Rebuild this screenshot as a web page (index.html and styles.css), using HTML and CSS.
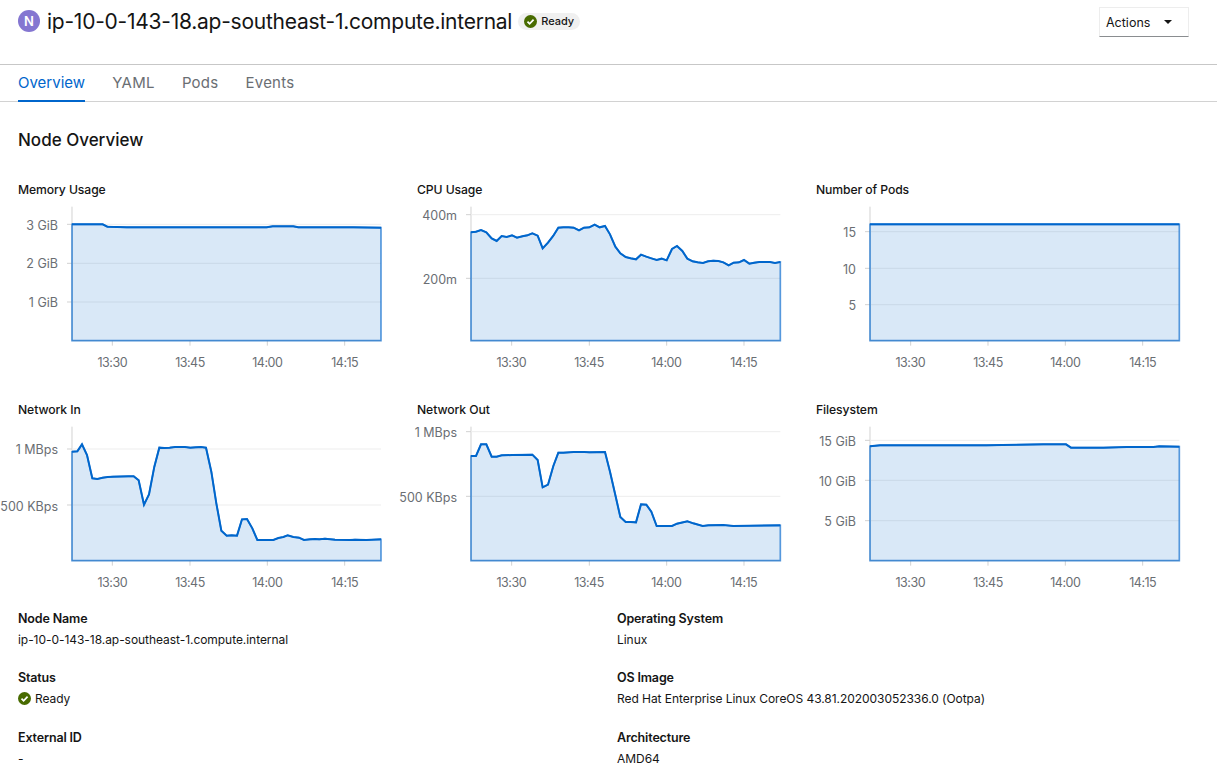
FILE: index.html
```html
<!DOCTYPE html>
<html lang="en">

<head>
    <meta charset="UTF-8">
    <title>Node details</title>
    <link rel="stylesheet" href="styles.css">
</head>

<body>
    <header class="page-head">
        <h1 class="node-title">
            <span class="node-badge">N</span>
            <span class="node-name">ip-10-0-143-18.ap-southeast-1.compute.internal</span>
            <span class="status-pill">
                <svg class="ok-icon" viewBox="0 0 16 16"><circle cx="8" cy="8" r="8" fill="#486b00"/><path d="M4.3 8.2l2.6 2.6 4.9-5" fill="none" stroke="#fff" stroke-width="2.2"/></svg>
                Ready
            </span>
        </h1>
        <button class="actions-btn">Actions <span class="caret"></span></button>
    </header>

    <nav class="tabs">
        <a href="#" class="tab active">Overview</a>
        <a href="#" class="tab">YAML</a>
        <a href="#" class="tab">Pods</a>
        <a href="#" class="tab">Events</a>
    </nav>

    <main class="overview">
        <h2>Node Overview</h2>

        <div class="charts">
            <!-- Memory Usage -->
            <figure class="chart">
                <figcaption>Memory Usage</figcaption>
                <svg viewBox="0 0 381 170">
                    <g transform="translate(-18 -25) scale(.33333)">
                        <path class="axis" d="M216 95V497H1143M337 497v15M570 497v15M802 497v15M1034 497v15M201 148h15M201 265h15M201 381h15"/>
                        <path class="grid" d="M216 148H1143M216 265H1143M216 381H1143"/>
                        <polygon class="area" points="216,497 216,148 308,148 322,155 380,157 800,157 818,154 880,154 895,157 1060,157 1143,158 1143,497"/>
                        <polyline class="line" points="216,148 308,148 322,155 380,157 800,157 818,154 880,154 895,157 1060,157 1143,158"/>
                    </g>
                    <text class="y-label" x="40" y="29">3 GiB</text>
                    <text class="y-label" x="40" y="67">2 GiB</text>
                    <text class="y-label" x="40" y="106">1 GiB</text>
                    <text class="x-label" x="94.3" y="166.5">13:30</text>
                    <text class="x-label" x="172" y="166.5">13:45</text>
                    <text class="x-label" x="249.3" y="166.5">14:00</text>
                    <text class="x-label" x="326.7" y="166.5">14:15</text>
                </svg>
            </figure>

            <!-- CPU Usage -->
            <figure class="chart">
                <figcaption>CPU Usage</figcaption>
                <svg viewBox="0 0 381 170">
                    <g transform="translate(-7 -25) scale(.33333)">
                        <path class="axis" d="M183 95V497H1111M305 497v15M538 497v15M770 497v15M1002 497v15M168 119h15M168 310h15"/>
                        <path class="grid" d="M183 119H1111M183 310H1111"/>
                        <polygon class="area" points="183,497 183,172 198,170 213,165 229,172 245,190 260,198 275,183 290,186 306,181 321,188 337,184 352,181 367,175 383,182 398,220 414,203 430,182 445,158 460,157 476,157 491,158 507,166 522,158 538,157 554,149 569,157 585,153 600,178 616,215 631,235 647,246 662,250 678,253 693,239 709,245 724,250 740,255 755,251 770,256 786,222 801,213 817,228 832,251 848,259 863,262 879,264 894,259 910,257 925,258 940,262 956,271 971,263 987,262 1002,255 1018,266 1033,263 1048,261 1064,261 1080,261 1095,264 1111,261 1111,497"/>
                        <polyline class="line" points="183,172 198,170 213,165 229,172 245,190 260,198 275,183 290,186 306,181 321,188 337,184 352,181 367,175 383,182 398,220 414,203 430,182 445,158 460,157 476,157 491,158 507,166 522,158 538,157 554,149 569,157 585,153 600,178 616,215 631,235 647,246 662,250 678,253 693,239 709,245 724,250 740,255 755,251 770,256 786,222 801,213 817,228 832,251 848,259 863,262 879,264 894,259 910,257 925,258 940,262 956,271 971,263 987,262 1002,255 1018,266 1033,263 1048,261 1064,261 1080,261 1095,264 1111,261"/>
                    </g>
                    <text class="y-label" x="40" y="19">400m</text>
                    <text class="y-label" x="40" y="83">200m</text>
                    <text class="x-label" x="94.3" y="166.5">13:30</text>
                    <text class="x-label" x="172" y="166.5">13:45</text>
                    <text class="x-label" x="249.3" y="166.5">14:00</text>
                    <text class="x-label" x="326.7" y="166.5">14:15</text>
                </svg>
            </figure>

            <!-- Number of Pods -->
            <figure class="chart">
                <figcaption>Number of Pods</figcaption>
                <svg viewBox="0 0 381 170">
                    <g transform="translate(-6 -25) scale(.33333)">
                        <path class="axis" d="M180 95V497H1108M302 497v15M534 497v15M766 497v15M998 497v15M165 170h15M165 280h15M165 389h15"/>
                        <path class="grid" d="M180 170H1108M180 280H1108M180 389H1108"/>
                        <polygon class="area" points="180,497 180,148 1108,148 1108,497"/>
                        <polyline class="line" points="180,148 1108,148"/>
                    </g>
                    <text class="y-label" x="40" y="36">15</text>
                    <text class="y-label" x="40" y="73">10</text>
                    <text class="y-label" x="40" y="109">5</text>
                    <text class="x-label" x="94.3" y="166.5">13:30</text>
                    <text class="x-label" x="172" y="166.5">13:45</text>
                    <text class="x-label" x="249.3" y="166.5">14:00</text>
                    <text class="x-label" x="326.7" y="166.5">14:15</text>
                </svg>
            </figure>

            <!-- Network In -->
            <figure class="chart">
                <figcaption>Network In</figcaption>
                <svg viewBox="0 0 381 170">
                    <g transform="translate(-18 -20) scale(.33333)">
                        <path class="axis" d="M216 80V482H1143M337 482v15M570 482v15M802 482v15M1034 482v15M201 147h15M201 315h15"/>
                        <path class="grid" d="M216 147H1143M216 315H1143"/>
                        <polygon class="area" points="216,482 216,155 232,154 246,133 261,165 277,235 292,237 308,233 323,231 339,230 385,229 401,229 416,241 432,314 447,283 463,200 478,143 493,144 509,143 525,141 555,141 571,143 587,142 603,141 618,143 634,215 649,310 664,392 680,407 695,406 711,407 726,358 741,357 757,385 772,420 790,420 820,420 835,414 850,411 863,406 880,411 897,413 912,420 930,418 945,417 958,418 975,416 1005,419 1050,420 1065,419 1100,420 1143,418 1143,482"/>
                        <polyline class="line" points="216,155 232,154 246,133 261,165 277,235 292,237 308,233 323,231 339,230 385,229 401,229 416,241 432,314 447,283 463,200 478,143 493,144 509,143 525,141 555,141 571,143 587,142 603,141 618,143 634,215 649,310 664,392 680,407 695,406 711,407 726,358 741,357 757,385 772,420 790,420 820,420 835,414 850,411 863,406 880,411 897,413 912,420 930,418 945,417 958,418 975,416 1005,419 1050,420 1065,419 1100,420 1143,418"/>
                    </g>
                    <text class="y-label" x="40" y="33">1 MBps</text>
                    <text class="y-label" x="40" y="90">500 KBps</text>
                    <text class="x-label" x="94.3" y="166.5">13:30</text>
                    <text class="x-label" x="172" y="166.5">13:45</text>
                    <text class="x-label" x="249.3" y="166.5">14:00</text>
                    <text class="x-label" x="326.7" y="166.5">14:15</text>
                </svg>
            </figure>

            <!-- Network Out -->
            <figure class="chart">
                <figcaption>Network Out</figcaption>
                <svg viewBox="0 0 381 170">
                    <g transform="translate(-7 -20) scale(.33333)">
                        <path class="axis" d="M183 80V482H1111M305 482v15M538 482v15M770 482v15M1002 482v15M168 95h15M168 289h15"/>
                        <path class="grid" d="M183 95H1111M183 289H1111"/>
                        <polygon class="area" points="183,482 183,168 198,168 213,133 229,133 245,170 260,170 275,166 306,165 367,164 383,180 398,262 414,254 430,198 445,158 460,158 491,156 522,156 538,157 585,156 600,215 616,285 631,351 647,366 662,366 678,367 693,313 709,314 724,335 740,378 786,378 801,371 832,364 850,370 878,378 895,376 940,375 970,378 1111,376 1111,482"/>
                        <polyline class="line" points="183,168 198,168 213,133 229,133 245,170 260,170 275,166 306,165 367,164 383,180 398,262 414,254 430,198 445,158 460,158 491,156 522,156 538,157 585,156 600,215 616,285 631,351 647,366 662,366 678,367 693,313 709,314 724,335 740,378 786,378 801,371 832,364 850,370 878,378 895,376 940,375 970,378 1111,376"/>
                    </g>
                    <text class="y-label" x="40" y="16">1 MBps</text>
                    <text class="y-label" x="40" y="81">500 KBps</text>
                    <text class="x-label" x="94.3" y="166.5">13:30</text>
                    <text class="x-label" x="172" y="166.5">13:45</text>
                    <text class="x-label" x="249.3" y="166.5">14:00</text>
                    <text class="x-label" x="326.7" y="166.5">14:15</text>
                </svg>
            </figure>

            <!-- Filesystem -->
            <figure class="chart">
                <figcaption>Filesystem</figcaption>
                <svg viewBox="0 0 381 170">
                    <g transform="translate(-6 -20) scale(.33333)">
                        <path class="axis" d="M180 80V482H1108M302 482v15M534 482v15M766 482v15M998 482v15M165 121h15M165 241h15M165 362h15"/>
                        <path class="grid" d="M180 121H1108M180 241H1108M180 362H1108"/>
                        <polygon class="area" points="180,482 180,139 210,136 530,136 700,133 768,133 783,143 880,143 950,141 1030,141 1048,139 1108,140 1108,482"/>
                        <polyline class="line" points="180,139 210,136 530,136 700,133 768,133 783,143 880,143 950,141 1030,141 1048,139 1108,140"/>
                    </g>
                    <text class="y-label" x="40" y="25">15 GiB</text>
                    <text class="y-label" x="40" y="65">10 GiB</text>
                    <text class="y-label" x="40" y="105">5 GiB</text>
                    <text class="x-label" x="94.3" y="166.5">13:30</text>
                    <text class="x-label" x="172" y="166.5">13:45</text>
                    <text class="x-label" x="249.3" y="166.5">14:00</text>
                    <text class="x-label" x="326.7" y="166.5">14:15</text>
                </svg>
            </figure>
        </div>

        <div class="details">
            <dl>
                <dt>Node Name</dt>
                <dd>ip-10-0-143-18.ap-southeast-1.compute.internal</dd>
                <dt>Status</dt>
                <dd class="status-value">
                    <svg class="ok-icon" viewBox="0 0 16 16"><circle cx="8" cy="8" r="8" fill="#486b00"/><path d="M4.3 8.2l2.6 2.6 4.9-5" fill="none" stroke="#fff" stroke-width="2.2"/></svg>
                    Ready
                </dd>
                <dt>External ID</dt>
                <dd>-</dd>
            </dl>
            <dl>
                <dt>Operating System</dt>
                <dd>Linux</dd>
                <dt>OS Image</dt>
                <dd>Red Hat Enterprise Linux CoreOS 43.81.202003052336.0 (Ootpa)</dd>
                <dt>Architecture</dt>
                <dd>AMD64</dd>
            </dl>
        </div>
    </main>
</body>

</html>
```

FILE: styles.css
```css
/* General page */
html,
body {
    height: 777px;
    overflow: hidden;
}

body {
    margin: 0;
    font-family: Inter, "Noto Sans", sans-serif;
    color: #151515;
    background: #fff;
}

/* Title row */
.page-head {
    display: flex;
    justify-content: space-between;
    align-items: flex-start;
    height: 64px;
    padding: 0 28px 0 18px;
    border-bottom: 1px solid #c7c7c7;
}

.node-title {
    display: flex;
    align-items: center;
    margin: 7px 0 0;
    height: 28px;
    font-size: 21px;
    font-weight: 400;
}

.node-badge {
    display: flex;
    justify-content: center;
    align-items: center;
    width: 22px;
    height: 22px;
    margin-right: 7px;
    border-radius: 50%;
    background: #8476d1;
    color: #fff;
    font-size: 13px;
    font-weight: 600;
}

.node-name {
    white-space: nowrap;
    letter-spacing: -0.25px;
}

.status-pill {
    display: flex;
    align-items: center;
    gap: 4px;
    height: 17px;
    margin-left: 6px;
    padding: 0 6px;
    border-radius: 9px;
    background: #f0f0f0;
    font-size: 11px;
    font-weight: 500;
}

.ok-icon {
    width: 13px;
    height: 13px;
    flex: none;
}

.actions-btn {
    display: flex;
    justify-content: space-between;
    align-items: center;
    box-sizing: border-box;
    width: 90px;
    height: 30px;
    margin-top: 7px;
    padding: 0 16px 0 6px;
    border: 1px solid #ededed;
    border-bottom-color: #8a8d90;
    background: #fff;
    color: #151515;
    font-family: inherit;
    font-size: 12.5px;
}

.caret {
    border-left: 4px solid transparent;
    border-right: 4px solid transparent;
    border-top: 4px solid #151515;
}

/* Tabs */
.tabs {
    display: flex;
    gap: 27.3px;
    height: 36px;
    padding: 0 18px;
    border-bottom: 1px solid #d2d2d2;
}

.tab {
    height: 35px;
    line-height: 36px;
    color: #6a6e73;
    font-size: 15px;
    letter-spacing: 0.2px;
    text-decoration: none;
}

.tab.active {
    height: 35px;
    border-bottom: 2px solid #06c;
    color: #06c;
    letter-spacing: 0;
}

/* Overview section */
.overview {
    padding: 26px 18px 0;
}

h2 {
    margin: 0 0 27px;
    font-size: 17px;
    line-height: 24px;
    font-weight: 500;
}

.charts {
    display: grid;
    grid-template-columns: repeat(3, 399px);
    grid-auto-rows: 220px;
}

.chart {
    margin: 0;
}

.chart figcaption {
    height: 21px;
    font-size: 12.2px;
    line-height: 21px;
    font-weight: 500;
    letter-spacing: -0.1px;
}

.chart svg {
    display: block;
    width: 381px;
    height: 170px;
    overflow: visible;
}

/* Chart parts, the group is scaled by a third so strokes are 3x */
.axis {
    fill: none;
    stroke: #d2d2d2;
    stroke-width: 3;
}

.grid {
    fill: none;
    stroke: #ededed;
    stroke-width: 3;
}

.area {
    fill: rgba(0, 102, 204, 0.15);
    stroke: rgba(0, 102, 204, 0.65);
    stroke-width: 5;
}

.line {
    fill: none;
    stroke: #06c;
    stroke-width: 6;
}

.y-label,
.x-label {
    fill: #6a6e73;
    font-size: 12.5px;
}

.y-label {
    text-anchor: end;
    transform: translateY(1px);
}

.x-label {
    text-anchor: middle;
    letter-spacing: -0.5px;
}

/* Details below the charts */
.details {
    display: grid;
    grid-template-columns: 599px 1fr;
    margin-top: -11.4px;
}

dl {
    margin: 0;
}

dt {
    font-size: 12.5px;
    line-height: 21px;
    font-weight: 600;
    letter-spacing: -0.15px;
}

dd {
    margin: 0 0 17.5px;
    font-size: 12px;
    line-height: 21px;
    letter-spacing: -0.05px;
}

.status-value {
    display: flex;
    align-items: center;
    gap: 4px;
}
```
